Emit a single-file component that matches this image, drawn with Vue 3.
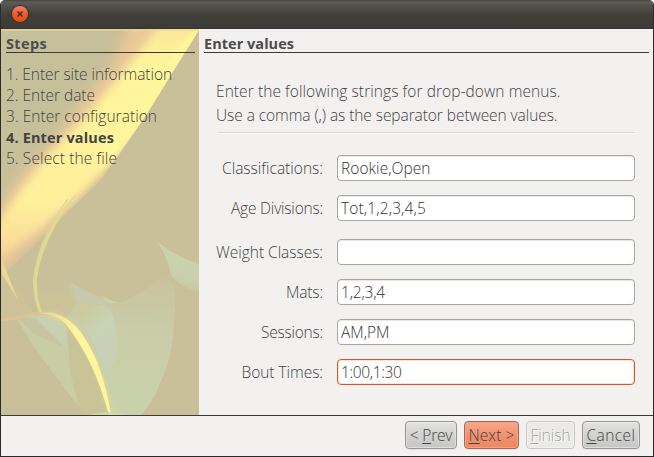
<script setup>
const steps = [
  { text: '1. Enter site information', width: 166 },
  { text: '2. Enter date', width: 89 },
  { text: '3. Enter configuration', width: 151 },
  { text: '4. Enter values', width: 108, current: true },
  { text: '5. Select the file', width: 111 },
]

const notes = [
  { text: 'Enter the following strings for drop-down menus.', width: 344.5 },
  { text: 'Use a comma (,) as the separator between values.', width: 341.5 },
]

const fields = [
  { label: 'Classifications:', labelWidth: 101, value: 'Rookie,Open', valueWidth: 89.5 },
  { label: 'Age Divisions:', labelWidth: 92, value: 'Tot,1,2,3,4,5', valueWidth: 85 },
  { label: 'Weight Classes:', labelWidth: 107, value: '', valueWidth: 0, spaced: true },
  { label: 'Mats:', labelWidth: 37, value: '1,2,3,4', valueWidth: 44 },
  { label: 'Sessions:', labelWidth: 62, value: 'AM,PM', valueWidth: 48.5 },
  { label: 'Bout Times:', labelWidth: 81.5, value: '1:00,1:30', valueWidth: 60.5, focused: true },
]

const buttons = [
  { before: '< ', key: 'P', after: 'rev', width: 42.5, kind: 'prev' },
  { before: '', key: 'N', after: 'ext >', width: 46, kind: 'next' },
  { before: '', key: 'F', after: 'inish', width: 40, kind: 'finish', disabled: true },
  { before: '', key: 'C', after: 'ancel', width: 49, kind: 'cancel' },
]

// Tracks a label so that it sets to the given width in pixels.
const vFit = {
  mounted(el, { value }) {
    const count = el.textContent.length
    if (!count) return
    const natural = el.getBoundingClientRect().width
    el.style.letterSpacing = `${(value - natural) / count}px`
  },
}
</script>

<template>
  <div class="window">
    <header class="titlebar">
      <button class="close" aria-label="Close">
        <svg viewBox="0 0 16 16" width="16" height="16">
          <path d="M5.5 5.5 10.5 10.5M10.5 5.5 5.5 10.5" stroke="#43281f" stroke-width="1.4" fill="none" />
        </svg>
      </button>
    </header>

    <main class="body">
      <aside class="sidebar">
        <svg class="art" viewBox="1 29 198 386" width="198" height="386" preserveAspectRatio="none">
          <defs>
            <filter id="b05" color-interpolation-filters="sRGB" x="-20%" y="-20%" width="140%" height="140%"><feGaussianBlur stdDeviation=".6" /></filter>
            <filter id="b2" color-interpolation-filters="sRGB" x="-20%" y="-20%" width="140%" height="140%"><feGaussianBlur stdDeviation="2.2" /></filter>
            <filter id="b4" color-interpolation-filters="sRGB" x="-20%" y="-20%" width="140%" height="140%"><feGaussianBlur stdDeviation="4" /></filter>
            <filter id="b6" color-interpolation-filters="sRGB" x="-20%" y="-20%" width="140%" height="140%"><feGaussianBlur stdDeviation="6" /></filter>
            <clipPath id="edge"><path d="M0 20H205L199 30 172 73 148 112 120 153 100 181 75 205 40 240 0 278Z" /></clipPath>
            <linearGradient id="veil" gradientUnits="userSpaceOnUse" x1="130" y1="275" x2="125" y2="415">
              <stop offset="0" stop-color="#c9c29c" />
              <stop offset=".35" stop-color="#c9cca7" />
              <stop offset="1" stop-color="#c9d2ab" />
            </linearGradient>
            <linearGradient id="leaf" gradientUnits="userSpaceOnUse" x1="185" y1="258" x2="175" y2="292">
              <stop offset="0" stop-color="#c9d2ae" />
              <stop offset=".55" stop-color="#c9cfab" />
              <stop offset="1" stop-color="#c9c29c" />
            </linearGradient>
            <linearGradient id="lobe" gradientUnits="userSpaceOnUse" x1="80" y1="315" x2="110" y2="340">
              <stop offset="0" stop-color="#cbcb9c" />
              <stop offset=".6" stop-color="#c8d2b4" />
              <stop offset="1" stop-color="#c8d1b5" />
            </linearGradient>
            <linearGradient id="beam" gradientUnits="userSpaceOnUse" x1="0" y1="30" x2="0" y2="262">
              <stop offset="0" stop-color="#fbe899" />
              <stop offset=".15" stop-color="#fff59b" />
              <stop offset=".75" stop-color="#fff09b" />
              <stop offset="1" stop-color="#f7d39a" />
            </linearGradient>
            <linearGradient id="streak" gradientUnits="userSpaceOnUse" x1="36" y1="312" x2="75" y2="330">
              <stop offset="0" stop-color="#e8cc8c" />
              <stop offset="1" stop-color="#fff59d" />
            </linearGradient>
          </defs>

          <rect x="1" y="29" width="198" height="386" fill="#c9c09a" />
          <path d="M1 29H115L75 100 1 185Z" fill="#c5c09a" filter="url(#b6)" />
          <g clip-path="url(#edge)">
            <path d="M133 18H215L175 76 122 150 100 175 50 228 -12 284V226L20 176 52 142 84 100 112 66Z" fill="#ebc998" filter="url(#b6)" />
            <path d="M162 22 210 14 176 76 150 116 116 158 76 198 36 232 -8 262V232L22 189 50 154 84 119 118 79Z" fill="url(#beam)" filter="url(#b4)" />
            <path d="M200 22 210 20 174 78 148 118 118 152 98 172 108 140 150 84Z" fill="#fff59b" filter="url(#b2)" />
          </g>
          <path d="M1 29H199V31H1Z" fill="#ecd894" opacity=".6" filter="url(#b05)" />

          <path d="M157 242Q177 257 199 264V292Q183 289 171 276 167 254 157 242Z" fill="url(#leaf)" filter="url(#b05)" />

          <path d="M70 281Q90 295 118 303 145 294 160 276L174 284Q178 342 162 379 153 402 141 415H86L58 378 33 345 14 313 36 313 60 300Z" fill="url(#veil)" filter="url(#b05)" />
          <path d="M33 345 14 314 38 312 66 330 68 362 77 404 56 377Z" fill="#c8cda3" filter="url(#b05)" />
          <path d="M37 313 53 313 65 322 68 350Q46 341 37 313Z" fill="#c9d0b1" filter="url(#b05)" />
          <path d="M16 316 36 319 66 348 34 334Z" fill="#c6c3a2" opacity=".8" filter="url(#b05)" />
          <path d="M67 322Q68 359 71 376L78 405 86 415H110Q103 350 67 322Z" fill="#c9c498" />
          <path d="M34 285Q52 300 68 285L76 305 64 320 42 313Z" fill="#cbc297" filter="url(#b05)" />
          <path d="M72 306Q105 292 114 318 119 336 116 357 112 369 104 371 93 336 72 306Z" fill="url(#lobe)" filter="url(#b05)" />
          <path d="M70 281Q86 295 118 304 90 307 76 300Z" fill="#c8c8aa" filter="url(#b05)" />
          <path d="M102 296 117 303 108 303Z" fill="#c8d7a7" />
          <path d="M1 268Q11 280 33 312 16 321 1 320Z" fill="#ccc198" />

          <path d="M80 190Q36 235 33 282 34 303 40 314L43 313Q36 300 37 278 43 236 80 190Z" fill="#dfd991" filter="url(#b05)" />
          <path d="M68 199Q36 240 34 285" fill="none" stroke="#dcd690" stroke-width="1.2" filter="url(#b05)" />
          <path d="M1 258 5 268 18 300 2 274Z" fill="#ecd890" filter="url(#b05)" />
          <path d="M1 320Q17 319 29 315 45 311 58 316" fill="none" stroke="#dcc391" stroke-width="2.5" filter="url(#b05)" />
          <path d="M48 314Q74 318 90 352 104 380 111 415" fill="none" stroke="#dddb98" stroke-width="6" opacity=".7" filter="url(#b2)" />
          <path d="M38 313Q64 309 82 334 92 349 98 364 107 389 111 415H109Q101 386 91 365 80 342 65 323 54 314 38 313Z" fill="url(#streak)" filter="url(#b05)" />
          <path d="M85 417Q109 407 133 417Z" fill="#d5dda0" opacity=".8" filter="url(#b05)" />
        </svg>
        <div class="steps">
          <h2><span v-fit="41">Steps</span></h2>
          <ol>
            <li v-for="s in steps" :key="s.text" :class="{ current: s.current }">
              <span v-fit="s.width">{{ s.text }}</span>
            </li>
          </ol>
        </div>
      </aside>

      <section class="panel">
        <h2><span v-fit="90">Enter values</span></h2>
        <div class="notes">
          <p v-for="n in notes" :key="n.text"><span v-fit="n.width">{{ n.text }}</span></p>
        </div>
        <div class="rows">
          <label v-for="f in fields" :key="f.label" class="row" :class="{ spaced: f.spaced }">
            <span class="name"><span v-fit="f.labelWidth">{{ f.label }}</span></span>
            <span class="input" :class="{ focused: f.focused }"><span v-fit="f.valueWidth">{{ f.value }}</span></span>
          </label>
        </div>
      </section>
    </main>

    <footer class="footer">
      <button v-for="b in buttons" :key="b.key" class="btn" :class="b.kind" :disabled="b.disabled">
        <span v-fit="b.width" class="caption">{{ b.before }}<span class="key">{{ b.key }}</span>{{ b.after }}</span>
      </button>
    </footer>
  </div>
</template>

<style>
body {
  margin: 0;
  background: #fff;
}
</style>

<style scoped>
.window {
  box-sizing: border-box;
  width: 654px;
  height: 457px;
  display: flex;
  flex-direction: column;
  border: 1px solid #2b2a2c;
  border-top: 0;
  border-radius: 5px 5px 0 0;
  overflow: hidden;
  background: #f2f1f0;
  color: #434343;
  font: 300 15.5px/21px "Open Sans", "Noto Sans", sans-serif;
}
span {
  white-space: pre;
}
.titlebar {
  box-sizing: border-box;
  height: 29px;
  flex: none;
  display: flex;
  padding: 6px 0 0 11px;
  background: linear-gradient(#45443f 0, #5b5a54 2px, #504f49 7px, #403f3a 15px, #3c3b37 28px);
  border-bottom: 1px solid #353431;
}
.close {
  width: 16px;
  height: 16px;
  padding: 0;
  border: 0;
  border-radius: 50%;
  background: linear-gradient(#f28260, #ef5c2b 50%, #e64b12);
  box-shadow: 0 0 0 1px #33322e;
}
.close svg {
  display: block;
}
.body {
  display: flex;
  height: 386px;
  flex: none;
}
.sidebar {
  width: 198px;
  display: grid;
}
.art,
.steps {
  grid-area: 1 / 1;
}
.art {
  display: block;
}
.steps {
  z-index: 1;
  padding: 4px 4px 0 5px;
}
h2 {
  box-sizing: border-box;
  height: 20px;
  margin: 0;
  border-bottom: 1px solid #3c3b37;
  color: #4c4c4c;
  font-size: 14.5px;
  font-weight: 700;
  line-height: 21px;
}
ol {
  list-style: none;
  margin: 11px 0 0;
  padding: 0;
}
li {
  height: 21px;
}
.current {
  font-size: 14.5px;
  font-weight: 700;
}
.panel {
  flex: 1;
  padding: 4px 4px 0 5px;
}
.notes {
  margin: 26px 14px 0 12px;
  padding-bottom: 4px;
}
.notes::after {
  content: "";
  display: block;
  height: 1px;
  margin: 5px 0 0 2px;
  background: #dad9d7;
  box-shadow: 0 1px #f9f9f8;
}
.notes p {
  margin: 0;
  height: 24px;
  line-height: 24px;
}
.rows {
  display: grid;
  gap: 14px;
  margin-top: 18px;
}
.row {
  display: grid;
  grid-template-columns: 119px 298px;
  column-gap: 14px;
  height: 26px;
}
.spaced {
  margin-top: 4px;
}
.name {
  text-align: right;
  line-height: 27px;
}
.input {
  box-sizing: border-box;
  height: 26px;
  padding-left: 3px;
  border: 1px solid #a9a7a3;
  border-radius: 4px;
  background: #fff;
  box-shadow: inset 0 1px #e9e8e6;
  color: #333;
  line-height: 25px;
}
.focused {
  border-color: #d6562a;
  box-shadow: inset 0 0 0 1px #fbe0d6;
}
.footer {
  box-sizing: border-box;
  flex: 1;
  display: flex;
  justify-content: flex-end;
  gap: 7px;
  padding: 5px 13px 0 0;
  border-top: 1px solid #3c3b37;
}
.btn {
  box-sizing: border-box;
  height: 28px;
  padding: 0;
  border: 1px solid #979694;
  border-radius: 4px;
  background: linear-gradient(#e2e2e1, #d2d2d1 50%, #c6c6c5);
  box-shadow: inset 0 1px #efefee, inset 0 0 0 1px #dededd, 0 1px #e4e3e1;
  color: #434343;
  font: inherit;
  line-height: 26px;
}
.prev {
  width: 52px;
}
.next {
  width: 55px;
  border-color: #9d6d5a;
  background: linear-gradient(#f9a88a, #f29270 50%, #ed8760);
  box-shadow: inset 0 0 0 1px #f5a283, 0 1px #e4e3e1;
}
.finish {
  width: 49px;
  border-color: #c9c8c6;
  background: #ebeae9;
  box-shadow: inset 0 0 0 1px #f2f1f1;
  color: #a4a3a1;
  text-shadow: 1px 1px #fff;
}
.cancel {
  width: 58px;
}
.key {
  text-decoration: underline;
  text-decoration-thickness: 1px;
  text-underline-offset: 2px;
}
</style>
